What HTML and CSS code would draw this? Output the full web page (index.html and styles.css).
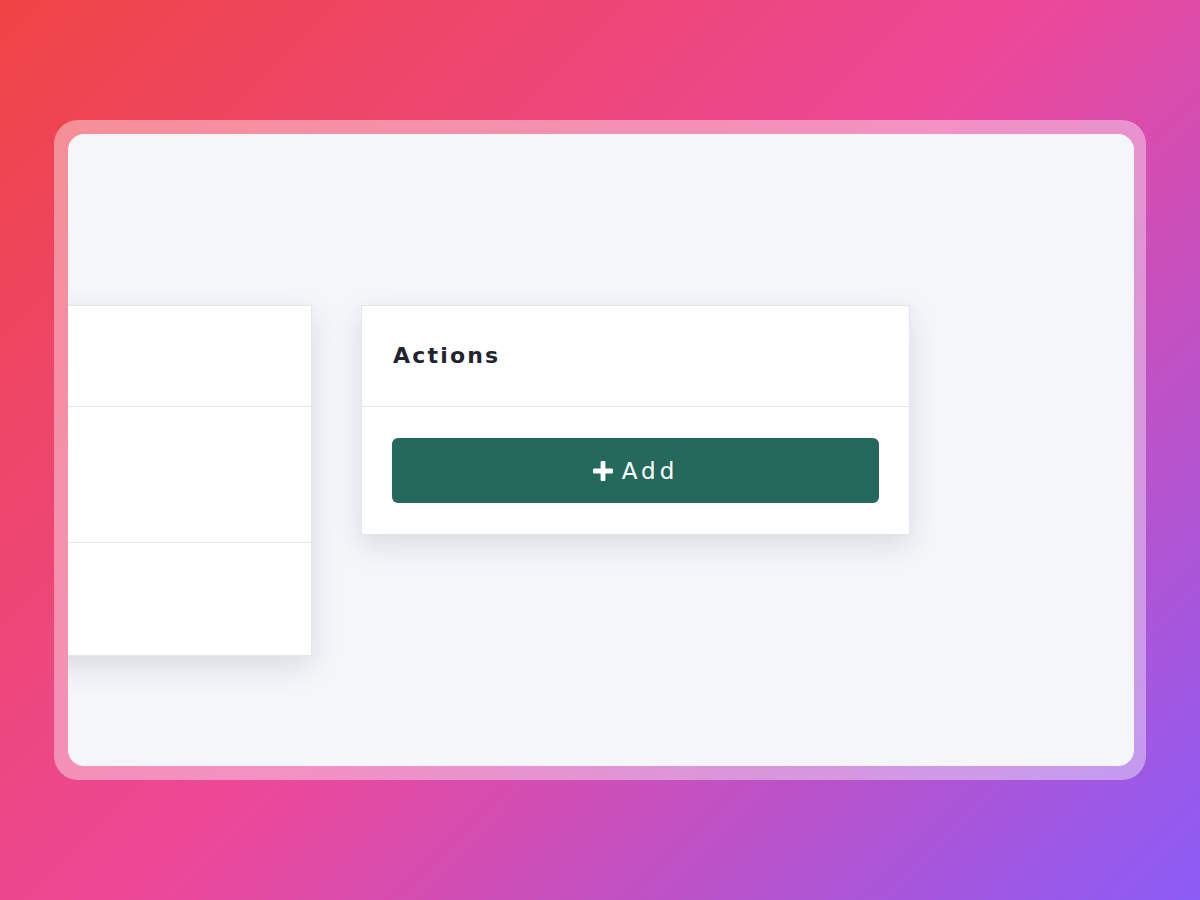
FILE: index.html
```html
<!DOCTYPE html>
<html lang="en">
<head>
<meta charset="utf-8">
<title>Actions</title>
<link rel="stylesheet" href="styles.css">
</head>
<body>
<div class="frame">
  <div class="screen">
    <div class="cards">
      <div class="card card-left">
        <div class="row row-1"></div>
        <div class="row row-2"></div>
        <div class="row row-3"></div>
      </div>
      <div class="card card-actions">
        <div class="card-header">
          <h2 class="card-title">Actions</h2>
        </div>
        <div class="card-body">
          <button class="btn-add" type="button">
            <svg class="plus" width="20" height="20" viewBox="0 0 20 20" aria-hidden="true"><rect x="7.6" y="0" width="4.8" height="20" rx="1.2" fill="#fff"/><rect x="0" y="7.6" width="20" height="4.8" rx="1.2" fill="#fff"/></svg>
            <span>Add</span>
          </button>
        </div>
      </div>
    </div>
  </div>
</div>
</body>
</html>
```
FILE: styles.css
```css
html, body {
  margin: 0;
  height: 100%;
}
body {
  background: linear-gradient(135deg, #ef4444 0%, #ec4899 50%, #8b5cf6 100%);
  font-family: "DejaVu Sans", "Liberation Sans", sans-serif;
  padding: 120px 54px;
  box-sizing: border-box;
  height: 900px;
}
.frame {
  height: 660px;
  box-sizing: border-box;
  padding: 14px 12px 14px 14px;
  border-radius: 24px;
  background: rgba(255, 255, 255, 0.4);
}
.screen {
  height: 100%;
  border-radius: 16px;
  background: #f5f6fa;
  overflow: hidden;
}
.cards {
  display: flex;
  align-items: flex-start;
  gap: 49px;
  padding-top: 171px;
  margin-left: -281px;
}
.card {
  background: #fff;
  border: 1px solid #e3e7ec;
  box-shadow: 0 10px 28px rgba(30, 35, 60, 0.13);
  box-sizing: border-box;
  flex: none;
}
.card-left {
  width: 525px;
}
.row {
  border-bottom: 1px solid #e3e7ec;
}
.row:last-child {
  border-bottom: none;
}
.row-1 { height: 100px; }
.row-2 { height: 135px; }
.row-3 { height: 112px; }
.card-actions {
  width: 549px;
}
.card-header {
  padding: 32px 31px 32px;
  border-bottom: 1px solid #e3e7ec;
}
.card-title {
  margin: 0;
  height: 36px;
  line-height: 36px;
  font-size: 22px;
  font-weight: bold;
  letter-spacing: 2.2px;
  color: #1f2430;
}
.card-body {
  padding: 31px 30px 31px;
}
.btn-add {
  width: 100%;
  height: 65px;
  border: none;
  border-radius: 6px;
  background: #25695c;
  color: #fff;
  display: flex;
  align-items: center;
  justify-content: center;
  gap: 9px;
  font-family: "DejaVu Sans", "Liberation Sans", sans-serif;
  font-size: 23px;
  font-weight: 500;
  letter-spacing: 4px;
  padding: 0;
  cursor: pointer;
}
.plus {
  display: block;
}
```
